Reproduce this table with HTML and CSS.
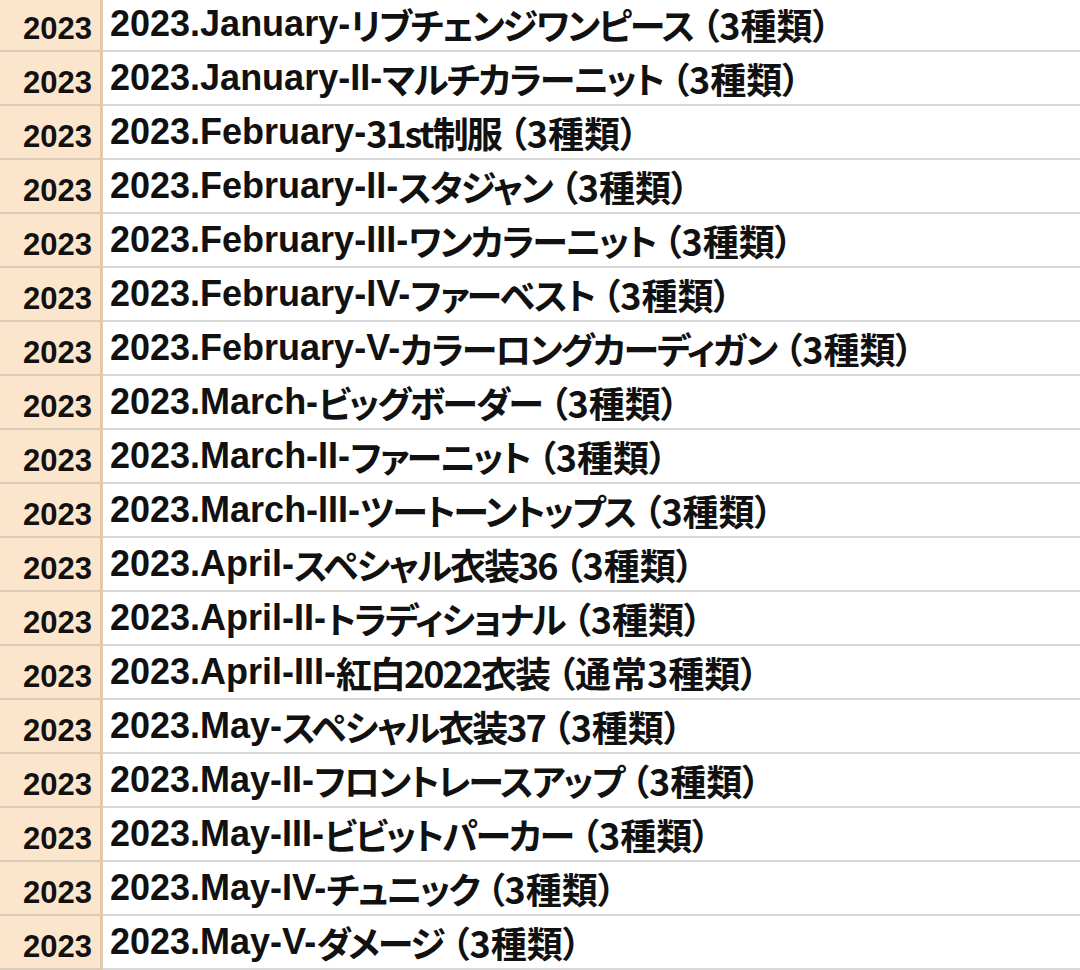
FILE: index.html
```html
<!DOCTYPE html>
<html lang="ja">
<head>
<meta charset="utf-8">
<link rel="stylesheet" href="styles.css">
</head>
<body>
<div class="sheet">
  <div class="yr">2023</div><div class="name"><span class="code">2023.January-</span><span class="title">リブチェンジワンピース</span><span class="qty">（3種類）</span></div>
  <div class="yr">2023</div><div class="name"><span class="code">2023.January-II-</span><span class="title">マルチカラーニット</span><span class="qty">（3種類）</span></div>
  <div class="yr">2023</div><div class="name"><span class="code">2023.February-</span><span class="title">31st制服</span><span class="qty">（3種類）</span></div>
  <div class="yr">2023</div><div class="name"><span class="code">2023.February-II-</span><span class="title">スタジャン</span><span class="qty">（3種類）</span></div>
  <div class="yr">2023</div><div class="name"><span class="code">2023.February-III-</span><span class="title">ワンカラーニット</span><span class="qty">（3種類）</span></div>
  <div class="yr">2023</div><div class="name"><span class="code">2023.February-IV-</span><span class="title">ファーベスト</span><span class="qty">（3種類）</span></div>
  <div class="yr">2023</div><div class="name"><span class="code">2023.February-V-</span><span class="title">カラーロングカーディガン</span><span class="qty">（3種類）</span></div>
  <div class="yr">2023</div><div class="name"><span class="code">2023.March-</span><span class="title">ビッグボーダー</span><span class="qty">（3種類）</span></div>
  <div class="yr">2023</div><div class="name"><span class="code">2023.March-II-</span><span class="title">ファーニット</span><span class="qty">（3種類）</span></div>
  <div class="yr">2023</div><div class="name"><span class="code">2023.March-III-</span><span class="title">ツートーントップス</span><span class="qty">（3種類）</span></div>
  <div class="yr">2023</div><div class="name"><span class="code">2023.April-</span><span class="title">スペシャル衣装36</span><span class="qty">（3種類）</span></div>
  <div class="yr">2023</div><div class="name"><span class="code">2023.April-II-</span><span class="title">トラディショナル</span><span class="qty">（3種類）</span></div>
  <div class="yr">2023</div><div class="name"><span class="code">2023.April-III-</span><span class="title">紅白2022衣装</span><span class="qty">（通常3種類）</span></div>
  <div class="yr">2023</div><div class="name"><span class="code">2023.May-</span><span class="title">スペシャル衣装37</span><span class="qty">（3種類）</span></div>
  <div class="yr">2023</div><div class="name"><span class="code">2023.May-II-</span><span class="title">フロントレースアップ</span><span class="qty">（3種類）</span></div>
  <div class="yr">2023</div><div class="name"><span class="code">2023.May-III-</span><span class="title">ビビットパーカー</span><span class="qty">（3種類）</span></div>
  <div class="yr">2023</div><div class="name"><span class="code">2023.May-IV-</span><span class="title">チュニック</span><span class="qty">（3種類）</span></div>
  <div class="yr">2023</div><div class="name"><span class="code">2023.May-V-</span><span class="title">ダメージ</span><span class="qty">（3種類）</span></div>
</div>
</body>
</html>
```
FILE: styles.css
```css
html, body {
  margin: 0;
  padding: 0;
  background: #ffffff;
  overflow: hidden;
}
.sheet {
  display: grid;
  grid-template-columns: 103px 1fr;
  grid-auto-rows: 54px;
  margin-top: -2px;
  font-weight: 700;
  color: #111111;
}
.yr {
  display: flex;
  align-items: flex-end;
  justify-content: flex-end;
  background: #fce5cd;
  border-right: 3px solid #e2c9ac;
  border-bottom: 2px solid #dccbb9;
  font-family: "Liberation Sans", "Noto Sans CJK JP", sans-serif;
  font-size: 31px;
  line-height: 1;
  padding: 0 8px 6px 0;
  box-sizing: border-box;
}
.name {
  display: flex;
  align-items: flex-end;
  border-bottom: 2px solid #d9d9d9;
  line-height: 1;
  padding: 0 0 8px 7px;
  box-sizing: border-box;
  white-space: nowrap;
}
.code {
  font-family: "Liberation Sans", "Noto Sans CJK JP", sans-serif;
  font-size: 36px;
}
.title,
.qty {
  font-family: "Noto Sans CJK JP", "Liberation Sans", sans-serif;
  font-size: 36px;
  font-feature-settings: "palt";
  line-height: 1;
}
.title {
  letter-spacing: -2px;
}
.qty {
  margin-left: 8px;
}
```
